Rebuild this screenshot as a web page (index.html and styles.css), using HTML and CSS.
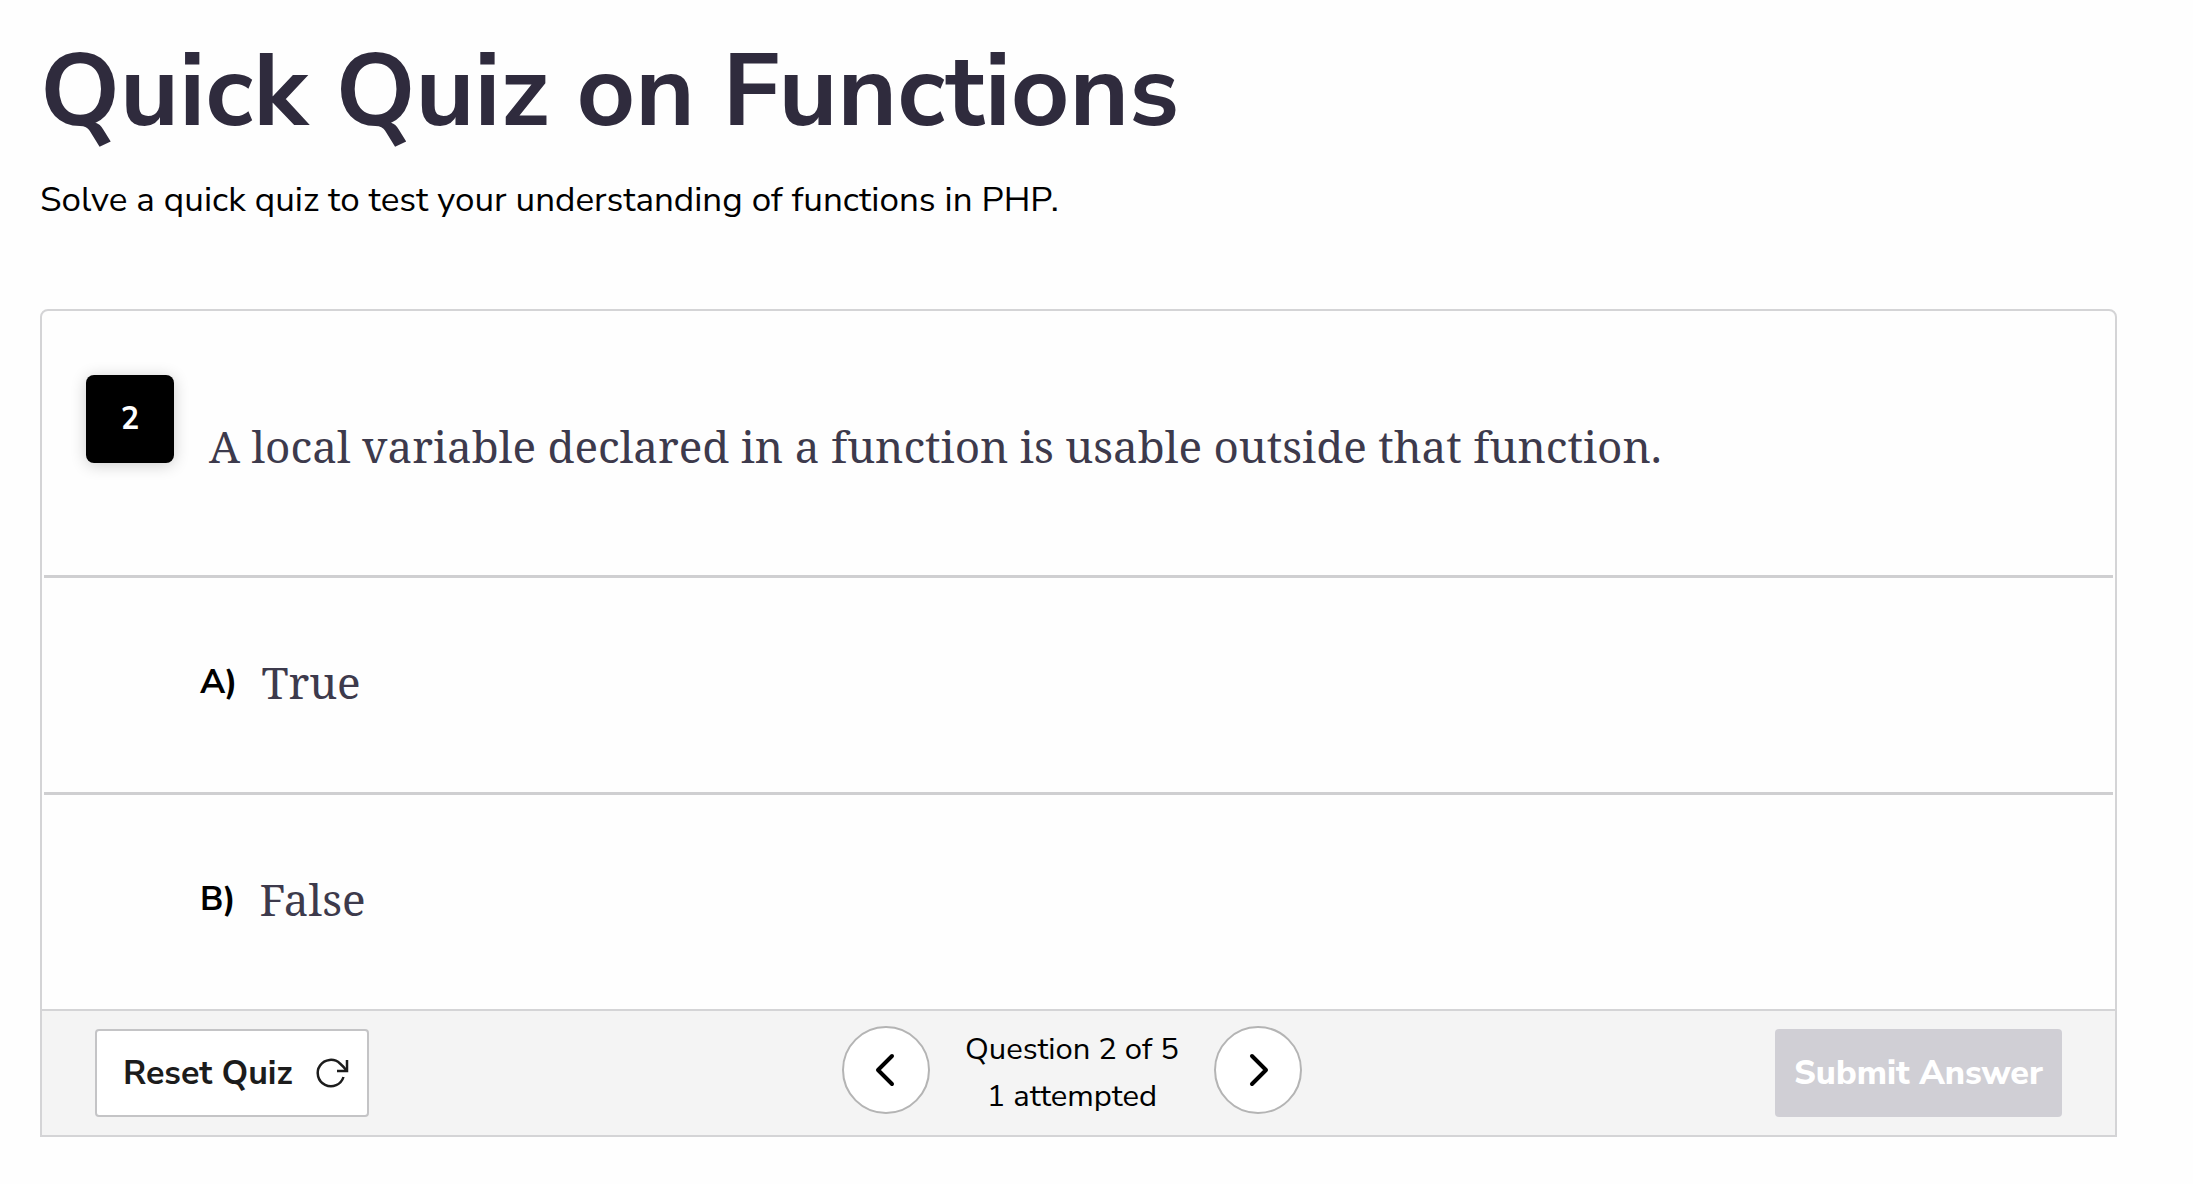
FILE: index.html
```html
<!DOCTYPE html>
<html lang="en">
<head>
    <meta charset="UTF-8">
    <meta name="viewport" content="width=device-width, initial-scale=1.0">
    <title>Quick Quiz on Functions</title>
    <link rel="stylesheet" href="styles.css">
</head>
<body>
    <h1>Quick Quiz on Functions</h1>
    <p class="intro">Solve a quick quiz to test your understanding of functions in PHP.</p>

    <div class="quiz">
        <!-- Question -->
        <div class="question">
            <div class="number">2</div>
            <p class="question-text">A local variable declared in a function is usable outside that function.</p>
        </div>

        <!-- Answers -->
        <button class="option" type="button">
            <span class="letter">A)</span>
            <span class="answer">True</span>
        </button>
        <button class="option" type="button">
            <span class="letter">B)</span>
            <span class="answer">False</span>
        </button>

        <!-- Controls -->
        <div class="controls">
            <button class="reset" type="button">
                Reset Quiz
                <svg width="34" height="34" viewBox="0 0 34 34" fill="none" stroke="currentColor" stroke-width="2.500">
                    <path d="M28.500 21A13.200 13.200 0 1 1 25 7.500Q29 11 31 14"/>
                    <path d="M32 4v11H22"/>
                </svg>
            </button>
            <div class="pager">
                <button class="round" type="button" aria-label="Previous question">
                    <svg width="40" height="40" viewBox="0 0 40 40" fill="none" stroke="currentColor" stroke-width="4" stroke-linecap="round" stroke-linejoin="round">
                        <path d="M26 6L12 20l14 14"/>
                    </svg>
                </button>
                <div class="status">
                    <div>Question 2 of 5</div>
                    <div>1 attempted</div>
                </div>
                <button class="round" type="button" aria-label="Next question">
                    <svg width="40" height="40" viewBox="0 0 40 40" fill="none" stroke="currentColor" stroke-width="4" stroke-linecap="round" stroke-linejoin="round">
                        <path d="M14 6l14 14-14 14"/>
                    </svg>
                </button>
            </div>
            <button class="submit" type="button" disabled>Submit Answer</button>
        </div>
    </div>
</body>
</html>
```

FILE: styles.css
```css
* {
    box-sizing: border-box;
}
body {
    margin: 0;
    padding: 32px 76px 32px 40px;
    background-color: #fefefe;
    color: #000;
    font-family: "Nunito Sans", Nunito, "Noto Sans", sans-serif;
}
h1 {
    margin: 0 0 24px;
    font-size: 102px;
    line-height: 120px;
    font-weight: 700;
    color: #2f2b3d;
}
.intro {
    margin: 0 0 85px;
    font-size: 35px;
    line-height: 48px;
}
button {
    font-family: inherit;
    cursor: pointer;
}
.quiz {
    border: 2px solid #d4d4d6;
    border-radius: 8px 8px 0 0;
}
.question {
    display: flex;
    align-items: flex-start;
    gap: 35px;
    min-height: 264px;
    padding: 64px 44px;
}
.number {
    display: flex;
    flex-shrink: 0;
    align-items: center;
    justify-content: center;
    width: 88px;
    height: 88px;
    border-radius: 8px;
    background-color: #000;
    color: #fff;
    font-size: 31px;
    font-weight: 700;
    box-shadow: 0 2px 16px rgba(0, 0, 0, 0.2);
}
.question-text,
.answer {
    color: #3d3a4c;
    font-family: "Noto Serif", "DejaVu Serif", serif;
    font-size: 44px;
    line-height: 66px;
}
.question-text {
    margin: 38px 0 0;
}
.option {
    display: flex;
    align-items: center;
    gap: 24px;
    width: calc(100% - 4px);
    height: 217px;
    margin: 0 2px;
    padding: 0 156px 6px;
    border: none;
    border-top: 3px solid #cfcfd1;
    background: none;
}
.letter {
    font-size: 34px;
    font-weight: 700;
    color: #000;
}
.controls {
    display: flex;
    align-items: center;
    justify-content: space-between;
    padding: 15px 53px;
    border-top: 2px solid #d4d4d6;
    background-color: #f4f4f4;
}
.reset,
.submit {
    display: flex;
    align-items: center;
    justify-content: center;
    height: 88px;
    border-radius: 4px;
    font-size: 34px;
}
.reset {
    gap: 22px;
    padding: 0 18px 0 26px;
    border: 2px solid #c4c4c6;
    background-color: #fff;
    color: #1c1c1c;
    font-weight: 700;
}
.submit {
    padding: 0 19px;
    border: none;
    background-color: #d0cfd5;
    color: #fff;
    font-weight: 800;
    cursor: default;
}
.pager {
    display: flex;
    align-items: flex-start;
    gap: 35px;
}
.round {
    display: flex;
    align-items: center;
    justify-content: center;
    width: 88px;
    height: 88px;
    padding: 0;
    border: 2px solid #b4b4b4;
    border-radius: 50%;
    background-color: #fff;
    color: #000;
}
.status {
    font-size: 31px;
    line-height: 47px;
    text-align: center;
}
```
